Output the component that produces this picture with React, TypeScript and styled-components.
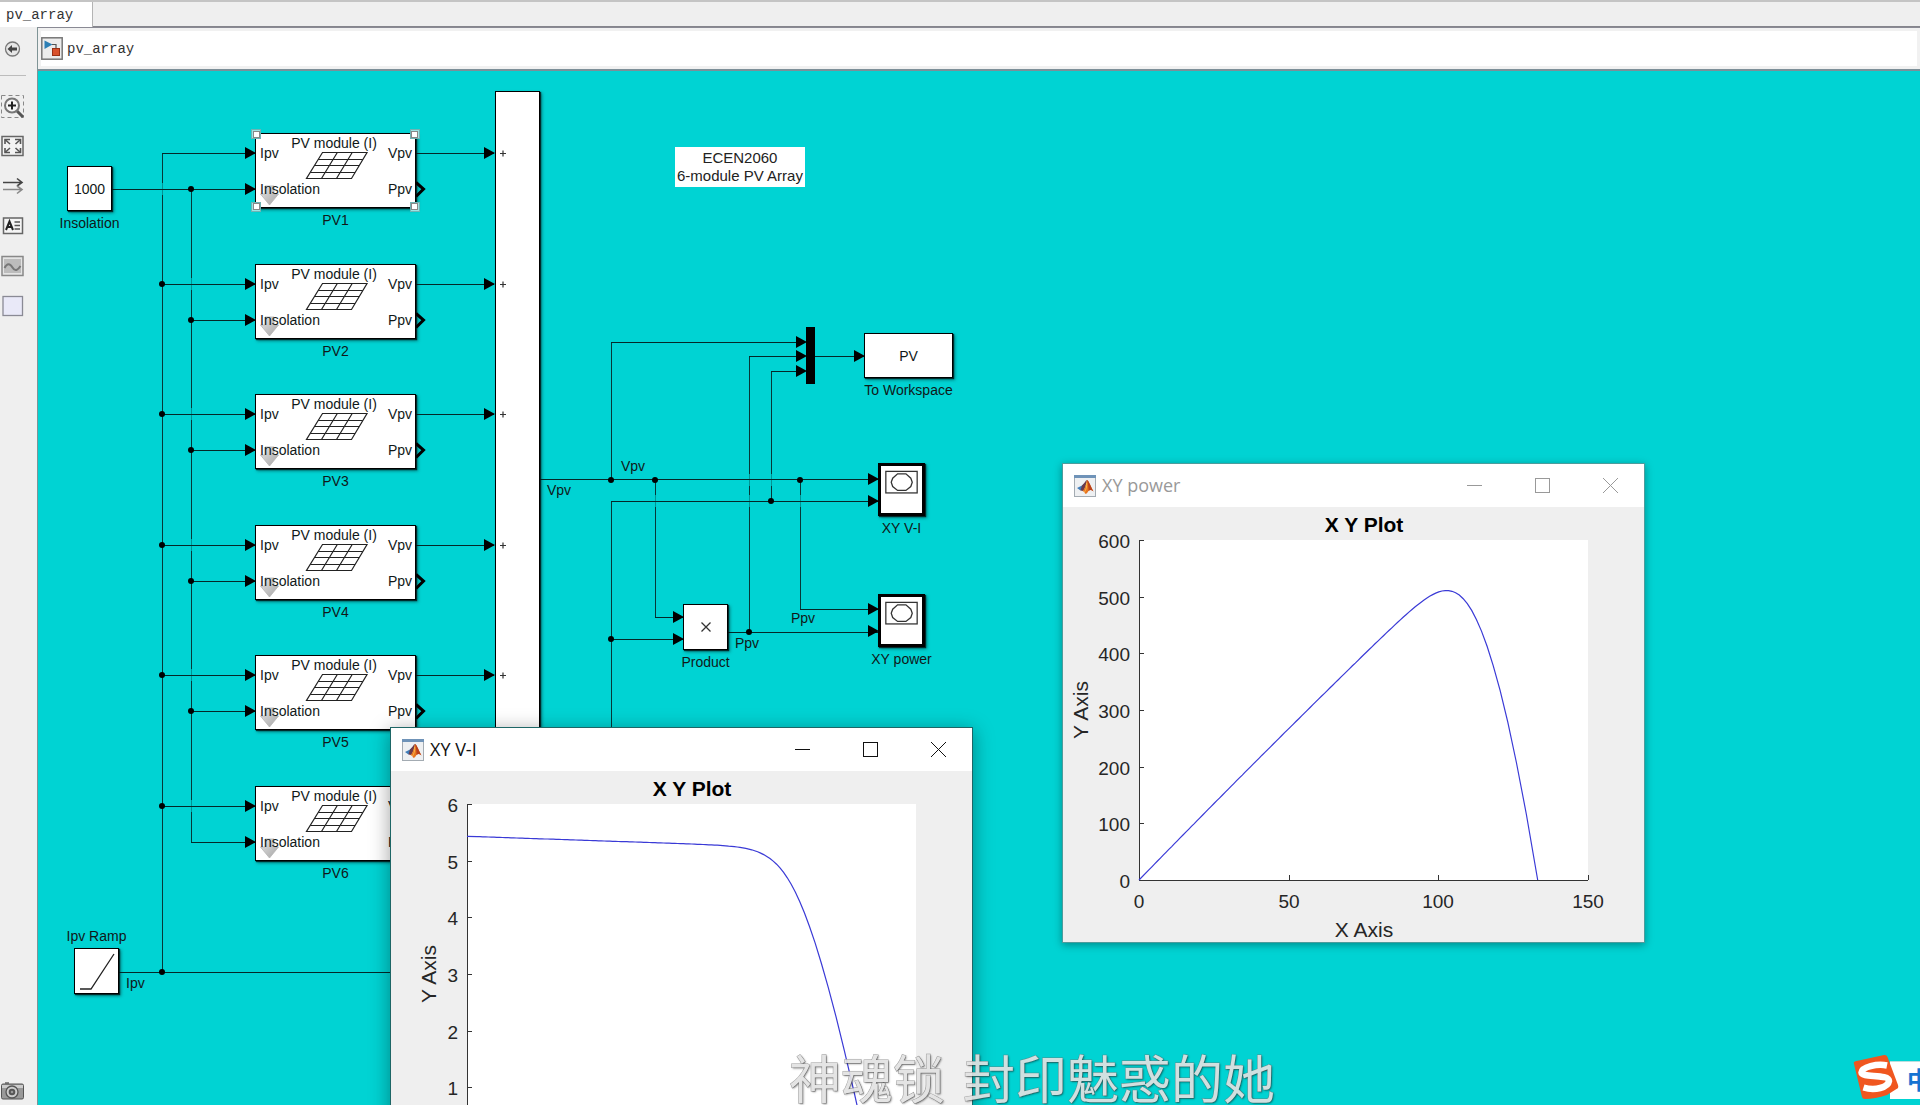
import React from "react";
import styled, { createGlobalStyle } from "styled-components";

const CYAN = "#00d3d3";
const PANEL = "#efefef";
const SANS = '"Liberation Sans", Arial, sans-serif';

const Global = createGlobalStyle`
  * { box-sizing: border-box; }
  html, body { margin: 0; height: 100%; overflow: hidden; }
  button { font: inherit; color: inherit; padding: 0; border: 0; background: none; }
`;

const Shell = styled.div`
  position: relative;
  display: flex;
  flex-direction: column;
  height: 100vh;
  overflow: hidden;
  background: ${PANEL};
  font-family: ${SANS};
  font-size: 14px;
  line-height: 16px;
  color: #101818;
`;

const TabBar = styled.nav`
  display: flex;
  height: 27px;
  border-top: 2px solid #c4c4c4;
  border-bottom: 1px solid #85858c;
  flex: none;
`;

const Tab = styled.button`
  width: 93px;
  height: 25px;
  padding: 0 0 0 6px;
  text-align: left;
  background: #fff;
  border-right: 1px solid #b4b4b4;
  font: 14px/26px "Liberation Mono", "Courier New", monospace;
  color: #333;
`;

const Main = styled.div`
  display: flex;
  flex: 1;
  min-height: 0;
`;

const ToolBar = styled.aside`
  display: flex;
  flex-direction: column;
  width: 37px;
  flex: none;
  padding-bottom: 2px;
`;

const Tool = styled.button<{ $h?: number }>`
  display: flex;
  align-items: center;
  width: 26px;
  height: ${(p) => p.$h ?? 40}px;
  svg { display: block; }
`;

const ToolRule = styled.hr`
  width: 26px;
  height: 1px;
  margin: 4px 0 10px;
  border: 0;
  background: #bcbcbc;
`;

const Spacer = styled.div`
  flex: 1;
`;

const Editor = styled.main`
  display: flex;
  flex-direction: column;
  flex: 1;
  min-width: 0;
  border-left: 1px solid #7f9496;
`;

const Crumbs = styled.div`
  display: flex;
  align-items: center;
  gap: 4px;
  height: 44px;
  padding-left: 3px;
  background: #fff;
  border-top: 1px solid #8a8a94;
  border-bottom: 2px solid #7c8f98;
  box-shadow: inset 0 0 0 3px #f1f1f1;
  flex: none;
  font: 14px/24px "Liberation Mono", "Courier New", monospace;
`;

const Crumb = styled.a`
  color: #333;
  text-decoration: none;
`;

const Canvas = styled.div`
  position: relative;
  flex: 1;
  overflow: hidden;
  background: ${CYAN};
`;

/* The model keeps its own coordinates; the sheet is scrolled under the view. */
const Sheet = styled.div`
  position: absolute;
  left: -38px;
  top: -71px;
  width: 1920px;
  height: 1200px;
`;

const Wires = styled.svg`
  position: absolute;
  inset: 0;
  width: 100%;
  height: 100%;
`;

const Node = styled.div<{ $x: number; $y: number; $w: number }>`
  position: absolute;
  left: ${(p) => p.$x}px;
  top: ${(p) => p.$y}px;
  width: ${(p) => p.$w}px;
  display: flex;
  flex-direction: column;
  align-items: center;
  gap: 4px;
  white-space: nowrap;
`;

const Box = styled.div<{ $h: number; $thick?: boolean }>`
  position: relative;
  display: flex;
  align-items: center;
  justify-content: center;
  width: 100%;
  height: ${(p) => p.$h}px;
  background: #fff;
  border: ${(p) => (p.$thick ? "3px solid #000" : "1px solid #000")};
  box-shadow: 1px 1px 1px rgba(0, 20, 20, 0.8), 2px 2px 3px rgba(0, 40, 40, 0.5);
  svg { display: block; }
`;

const PvBox = styled(Box)`
  display: block;
  padding: 1px;
`;

const PvArt = styled.svg`
  position: absolute;
  left: -1px;
  top: -1px;
  overflow: visible;
`;

const PvTitle = styled.div`
  position: relative;
  padding-right: 3px;
  height: 10px;
  text-align: center;
`;

const PortRow = styled.div`
  position: relative;
  display: flex;
  justify-content: space-between;
  padding: 0 2px 0 3px;
  height: 36px;
`;

const Handle = styled.i<{ $r?: boolean; $b?: boolean }>`
  position: absolute;
  ${(p) => (p.$r ? "right: -5px;" : "left: -5px;")}
  ${(p) => (p.$b ? "bottom: -5px;" : "top: -5px;")}
  width: 10px;
  height: 10px;
  display: flex;
  justify-content: ${(p) => (p.$r ? "flex-start" : "flex-end")};
  align-items: ${(p) => (p.$b ? "flex-start" : "flex-end")};
  background: #9be3e3;
  border: 1px solid #6fb4b4;
  &::after {
    content: "";
    width: 5px;
    height: 5px;
    background: #fff;
    border: 1px solid #888;
  }
`;

const SignalLabel = styled.span<{ $x: number; $y: number }>`
  position: absolute;
  left: ${(p) => p.$x}px;
  top: ${(p) => p.$y}px;
`;

const Note = styled.div`
  position: absolute;
  left: 675px;
  top: 147px;
  padding: 2px;
  background: #fff;
  text-align: center;
  font-size: 15px;
  line-height: 18px;
  white-space: nowrap;
  color: #222;
`;

const Win = styled.section<{ $x: number; $y: number; $active?: boolean }>`
  position: absolute;
  left: ${(p) => p.$x}px;
  top: ${(p) => p.$y}px;
  width: 581px;
  display: flex;
  flex-direction: column;
  background: ${PANEL};
  outline: 1px solid ${(p) => (p.$active ? "#1d6666" : "#4d9c9c")};
  box-shadow: ${(p) => (p.$active ? "0 4px 18px 2px rgba(0,0,0,.35)" : "0 2px 8px 1px rgba(0,0,0,.35)")};
  color: ${(p) => (p.$active ? "#111" : "#999")};
`;

const TitleBar = styled.header`
  display: flex;
  align-items: center;
  height: 43px;
  padding-left: 11px;
  background: #fff;
`;

const WinTitle = styled.h2`
  flex: 1;
  margin: 0;
  padding: 0 0 2px 6px;
  font: 400 18px/24px "Open Sans", "Noto Sans", sans-serif;
`;

const WinButton = styled.button`
  display: flex;
  align-items: center;
  justify-content: center;
  width: 68px;
  height: 43px;
`;

const Chart = styled.svg`
  display: block;
  width: 581px;
  height: 435px;
  font-family: ${SANS};
  font-size: 19px;
  fill: #262626;
  .name { font-size: 21px; }
  .title { font-size: 21px; font-weight: 700; fill: #000; }
`;

const Caption = styled.p`
  position: absolute;
  left: 789px;
  bottom: -10px;
  display: flex;
  gap: 18px;
  margin: 0;
  font: 400 52px/76px "Noto Sans CJK SC", sans-serif;
  color: #e2e2e2;
  white-space: nowrap;
  -webkit-text-stroke: 1px rgba(120, 120, 120, 0.75);
  paint-order: stroke;
  text-shadow: 1px 1px 2px rgba(0, 0, 0, 0.5);
  opacity: 0.92;
`;

const Ime = styled.div`
  position: absolute;
  right: 0;
  bottom: 6px;
  width: 30px;
  height: 38px;
  background: #fff;
  border-top: 1px solid #b8dede;
`;

const ImeMode = styled.button`
  position: absolute;
  left: 17px;
  top: 0;
  width: 24px;
  font: 700 24px/34px "Noto Sans CJK SC", sans-serif;
  color: #1673d2;
`;

const ImeLogo = styled.svg`
  position: absolute;
  left: -39px;
  top: -8px;
`;

/* ---------- model data ---------- */

const pvTops = [133, 264, 394, 525, 655, 786];
const ipvY = pvTops.map((t) => t + 20);
const insY = pvTops.map((t) => t + 56);

const Arrow = ({ x, y }: { x: number; y: number }) => (
  <path d={`M${x - 11} ${y - 6}L${x} ${y}L${x - 11} ${y + 6}Z`} fill="#000" />
);

const Dot = ({ x, y }: { x: number; y: number }) => <circle cx={x} cy={y} r={3} fill="#000" />;

const verticals: [number, number, number][] = [
  [162, 153, 972],
  [191, 189, 842],
  [611, 342, 480],
  [749, 356, 632],
  [771, 371, 501],
  [655, 480, 617],
  [800, 480, 609],
  [611, 501, 972],
];

const crossings: [number, number][] = [
  [162, 189],
  ...ipvY.slice(1).map((y) => [191, y] as [number, number]),
  [655, 501],
  [749, 480],
  [749, 501],
  [771, 480],
  [800, 501],
];

const horizontals: [number, number, number][] = [
  [112, 255, 189],
  [162, 255, 153],
  ...ipvY.slice(1).map((y) => [162, 255, y] as [number, number, number]),
  ...insY.slice(1).map((y) => [191, 255, y] as [number, number, number]),
  ...ipvY.map((y) => [416, 494, y] as [number, number, number]),
  [119, 611, 972],
  [540, 878, 479],
  [611, 878, 501],
  [611, 805, 342],
  [749, 805, 356],
  [771, 805, 371],
  [815, 864, 356],
  [655, 683, 617],
  [611, 683, 639],
  [728, 878, 632],
  [800, 878, 609],
];

const arrows: [number, number][] = [
  ...ipvY.map((y) => [256, y] as [number, number]),
  ...insY.map((y) => [256, y] as [number, number]),
  ...ipvY.map((y) => [495, y] as [number, number]),
  [879, 479],
  [879, 501],
  [879, 609],
  [879, 631],
  [807, 342],
  [807, 356],
  [807, 371],
  [865, 356],
  [684, 617],
  [684, 639],
];

const dots: [number, number][] = [
  ...ipvY.slice(1).map((y) => [162, y] as [number, number]),
  ...insY.slice(0, 5).map((y) => [191, y] as [number, number]),
  [162, 972],
  [611, 480],
  [655, 480],
  [800, 480],
  [771, 501],
  [611, 639],
  [749, 632],
];

function PvModule({ index, top, selected }: { index: number; top: number; selected?: boolean }) {
  return (
    <Node $x={255} $y={top} $w={161}>
      <PvBox $h={75}>
        <PvArt width="161" height="75" viewBox="0 0 161 75">
          <defs>
            <linearGradient id={`drop${index}`} x1="0" y1="0" x2="1" y2="1">
              <stop offset="0" stopColor="#e6e6e6" />
              <stop offset="1" stopColor="#a4a4a4" />
            </linearGradient>
          </defs>
          <path d="M10 53H19V61H23.500L14.500 72L5.500 61H10Z" fill={`url(#drop${index})`} stroke="#b5b5b5" strokeWidth="0.8" />
          <g fill="none" stroke="#222" strokeWidth="1.2">
            <path d="M67.500 19.500H112L96.500 45.500H51.500Z" />
            <path d="M63.200 26.500H107.800M59.500 32.500H104.200M55.300 39.500H100M82.300 19.500L66.500 45.500M97.200 19.500L81.500 45.500" />
          </g>
          <path d="M161 49.500L168.500 56L161 63.500" fill="none" stroke="#000" strokeWidth="3" />
        </PvArt>
        <PvTitle>PV module (I)</PvTitle>
        <PortRow>
          <span>Ipv</span>
          <span>Vpv</span>
        </PortRow>
        <PortRow>
          <span>Insolation</span>
          <span>Ppv</span>
        </PortRow>
        {selected && (
          <>
            <Handle />
            <Handle $r />
            <Handle $b />
            <Handle $r $b />
          </>
        )}
      </PvBox>
      <span>PV{index}</span>
    </Node>
  );
}

function Scope({ y, name }: { y: number; name: string }) {
  return (
    <Node $x={878} $y={y} $w={47}>
      <Box $h={53} $thick>
        <svg width="41" height="47" viewBox="0 0 41 48" fill="none" stroke="#333" strokeWidth="1.300">
          <rect x="4.500" y="5.500" width="32" height="22" />
          <path d="M16.500 8H25L30 12.500L31.500 16.500L30 21L25 25H16.500L11.500 21L10 16.500L11.500 12.500Z" />
        </svg>
      </Box>
      <span>{name}</span>
    </Node>
  );
}

const MatlabIcon = () => (
  <svg width="22" height="22" viewBox="0 0 22 22">
    <rect x="0.500" y="0.500" width="21" height="21" fill="#eef0f2" stroke="#a3abb2" />
    <rect x="0" y="0" width="22" height="3" fill="#6f93b8" />
    <path d="M3 13L8 10.500L11 8L9 14L6.500 15.500Z" fill="#3f7cb8" />
    <path d="M8 10.500C10 9 11.500 5.500 13 5C12.500 9 10.500 15 9 16L6.500 15.500Z" fill="#6b3a4a" />
    <path d="M13 5C15 6 17 12 19.500 16.500C17 14.500 15.500 14.500 13.500 17.500C12.500 19 11.500 19 11 18.500C10.500 17 10 16.500 8.500 16C11 14.500 12 8 13 5Z" fill="#e8741e" />
    <path d="M13 5C14 8 14.500 12 14.500 16C16 14.500 17 14.500 19.500 16.500C17 12 15 6 13 5Z" fill="#b8401b" />
    <path d="M12.600 8C12.800 12 12 15 10.500 17" stroke="#f9b64a" strokeWidth="1" fill="none" />
  </svg>
);

type FigureProps = {
  x: number;
  y: number;
  name: string;
  active?: boolean;
  xTicks?: number[];
  xName?: string;
  yTicks: number[];
  labelX: number;
  curve: [number, number][];
};

const PLOT = { x: 76, y: 33, w: 449, h: 340 };

function Figure({ x, y, name, active, xTicks = [], xName, yTicks, labelX, curve }: FigureProps) {
  const maxY = yTicks[yTicks.length - 1];
  const px = (v: number) => PLOT.x + (v / 150) * PLOT.w;
  const py = (v: number) => PLOT.y + PLOT.h - (v / maxY) * PLOT.h;
  const d = curve.map(([a, b], i) => `${i ? "L" : "M"}${px(a).toFixed(1)} ${py(b).toFixed(1)}`).join("");
  return (
    <Win $x={x} $y={y} $active={active} aria-label={name}>
      <TitleBar>
        <MatlabIcon />
        <WinTitle>{name}</WinTitle>
        <WinButton aria-label="Minimize">
          <svg width="15" height="15" stroke="currentColor"><path d="M0 7.500H15" /></svg>
        </WinButton>
        <WinButton aria-label="Maximize">
          <svg width="15" height="15" stroke="currentColor" fill="none"><rect x="0.500" y="0.500" width="14" height="14" /></svg>
        </WinButton>
        <WinButton aria-label="Close">
          <svg width="15" height="15" stroke="currentColor"><path d="M0 0L15 15M15 0L0 15" /></svg>
        </WinButton>
      </TitleBar>
      <Chart viewBox="0 0 581 435">
        <text className="title" x="301" y="25" textAnchor="middle">X Y Plot</text>
        <rect x={PLOT.x} y={PLOT.y} width={PLOT.w} height={PLOT.h} fill="#fff" />
        <path d="M76.500 33V373.500H525" fill="none" stroke="#333" />
        {yTicks.map((t) => (
          <g key={t}>
            <path d={`M76 ${Math.round(py(t)) + 0.5}h5`} stroke="#333" />
            <text x="67" y={Math.round(py(t)) + 8} textAnchor="end">{t}</text>
          </g>
        ))}
        {xTicks.map((t) => (
          <g key={t}>
            <path d={`M${Math.round(px(t)) + 0.5} 373v-5`} stroke="#333" />
            <text x={Math.round(px(t))} y="401" textAnchor="middle">{t}</text>
          </g>
        ))}
        {xName && <text className="name" x="301" y="430" textAnchor="middle">{xName}</text>}
        <text className="name" transform={`translate(${labelX} 203) rotate(-90)`} textAnchor="middle">Y Axis</text>
        <path d={d} fill="none" stroke="#3a3ad6" strokeWidth="1.200" />
      </Chart>
    </Win>
  );
}

/* Array characteristic: a linear shunt loss plus a diode term with series resistance. */
const viCurve: [number, number][] = [[0, 5.43]];
for (let i = 0; i <= 120; i++) {
  const ln = -21 + (i / 120) * (21 + Math.log(5.19));
  const drop = Math.exp(ln);
  const v = 108.36 + 5 * ln + 3.2 * drop;
  viCurve.push([v, Math.max(0, 5.43 - 0.0018 * v - drop)]);
}
const powerCurve = viCurve.map(([v, i]) => [v, v * i] as [number, number]);

export default function App() {
  return (
    <Shell>
      <Global />
      <TabBar>
        <Tab>pv_array</Tab>
      </TabBar>
      <Main>
        <ToolBar>
          <Tool $h={44} aria-label="Hide explorer">
            <svg width="25" height="18" viewBox="0 0 25 18">
              <circle cx="12.500" cy="9" r="7" fill="#e6e6e6" stroke="#777" strokeWidth="1.300" />
              <path d="M7.500 9L12 5V7.500H17V10.500H12V13Z" fill="#444" />
            </svg>
          </Tool>
          <ToolRule />
          <Tool aria-label="Zoom">
            <svg width="25" height="25" viewBox="0 0 25 25" fill="none">
              <rect x="1.500" y="1.500" width="22" height="22" stroke="#888" strokeDasharray="4 3" />
              <path d="M17 17L23 23" stroke="#555" strokeWidth="3" />
              <circle cx="12" cy="11.500" r="7" fill="#f6f6f6" stroke="#777" strokeWidth="2" />
              <path d="M8 11.500H16M12 7.500V15.500" stroke="#222" strokeWidth="2" />
            </svg>
          </Tool>
          <Tool aria-label="Fit to view">
            <svg width="25" height="22" viewBox="0 0 25 22" fill="none">
              <rect x="2" y="1.500" width="21" height="19" fill="#f3f3f3" stroke="#666" strokeWidth="1.500" />
              <path d="M5 9V4.500H10M15 4.500H20.500V9M20.500 13V17.500H15M10 17.500H5V13" stroke="#555" strokeWidth="1.600" />
              <path d="M5 4.500L10 9M20.500 4.500L15.500 9M20.500 17.500L15.500 13M5 17.500L10 13" stroke="#555" strokeWidth="1.600" />
            </svg>
          </Tool>
          <Tool aria-label="Sample time">
            <svg width="25" height="18" viewBox="0 0 25 18" fill="none" strokeWidth="1.600">
              <path d="M3 5.500H22M17 1.500L22 5.500L17 9" stroke="#444" />
              <path d="M3 12.500H22M17 9L22 12.500L17 16.500" stroke="#888" />
            </svg>
          </Tool>
          <Tool aria-label="Annotation">
            <svg width="25" height="20" viewBox="0 0 25 20" fill="none">
              <rect x="3.500" y="2" width="19" height="15.500" fill="#f5f5f5" stroke="#666" strokeWidth="1.500" />
              <path d="M6 14L9.500 5.500L13 14M7.500 11H12" stroke="#222" strokeWidth="2" />
              <path d="M14.500 6H20M14.500 9.500H20M14.500 13H20" stroke="#555" strokeWidth="1.300" />
            </svg>
          </Tool>
          <Tool aria-label="Image">
            <svg width="25" height="22" viewBox="0 0 25 22" fill="none">
              <rect x="2" y="1.500" width="21" height="19" fill="#e4e4e4" stroke="#888" strokeWidth="1.500" />
              <rect x="4" y="4" width="17" height="14" fill="#bcbcbc" />
              <path d="M4.500 13C7 8 10 8 12.500 12.500S18 15 20.500 11" stroke="#777" strokeWidth="2" />
            </svg>
          </Tool>
          <Tool aria-label="Area">
            <svg width="25" height="22" viewBox="0 0 25 22">
              <rect x="3" y="1.500" width="19.500" height="19" fill="#e9e9f8" stroke="#8a8a95" strokeWidth="1.300" />
            </svg>
          </Tool>
          <Spacer />
          <Tool $h={24} aria-label="Screenshot">
            <svg width="25" height="20" viewBox="0 0 25 20">
              <path d="M5 3V1H9V3" fill="#888" />
              <rect x="1.500" y="3" width="22" height="15" rx="1.500" fill="#999" stroke="#555" />
              <rect x="2" y="4" width="21" height="3" fill="#ccc" />
              <circle cx="12" cy="11" r="6" fill="#ccc" stroke="#555" strokeWidth="1.300" />
              <circle cx="12" cy="11" r="3.300" fill="#555" />
              <circle cx="12" cy="11" r="1.300" fill="#999" />
            </svg>
          </Tool>
        </ToolBar>
        <Editor>
          <Crumbs>
            <svg width="22" height="23" viewBox="0 0 22 23">
              <rect x="0.800" y="0.800" width="20.400" height="21.400" fill="#ececec" stroke="#777" strokeWidth="1.500" />
              <path d="M3.500 3.500L11.500 7.500L3.500 12Z" fill="#2d7fb5" />
              <path d="M11 7.500H15V12" fill="none" stroke="#555" strokeWidth="1.200" />
              <rect x="11.500" y="11.500" width="7" height="7" fill="#d9512c" stroke="#9a3015" />
            </svg>
            <Crumb href="#pv_array">pv_array</Crumb>
          </Crumbs>
          <Canvas>
            <Sheet>
              <Wires>
                <g shapeRendering="crispEdges" strokeWidth="1">
                  {verticals.map(([x, a, b], i) => (
                    <path key={i} d={`M${x} ${a}V${b}`} stroke="#063838" />
                  ))}
                  {crossings.map(([x, y], i) => (
                    <path key={i} d={`M${x} ${y - 6}V${y + 6}`} stroke={CYAN} strokeWidth="2" opacity="0.6" />
                  ))}
                  {horizontals.map(([a, b, y], i) => (
                    <path key={i} d={`M${a} ${y}H${b}`} stroke="#042828" />
                  ))}
                </g>
                {arrows.map(([x, y], i) => <Arrow key={i} x={x} y={y} />)}
                {dots.map(([x, y], i) => <Dot key={i} x={x} y={y} />)}
                <rect x="806" y="327" width="9" height="57" fill="#000" />
              </Wires>

              <Node $x={67} $y={166} $w={45}>
                <Box $h={45}>1000</Box>
                <span>Insolation</span>
              </Node>

              {pvTops.map((t, i) => <PvModule key={t} index={i + 1} top={t} selected={i === 0} />)}

              <Node $x={495} $y={91} $w={45}>
                <Box $h={778}>
                  <svg width="43" height="776" viewBox="0 0 43 776" stroke="#333" strokeWidth="1.200">
                    {ipvY.map((y) => <path key={y} d={`M4 ${y - 91.5}h6m-3 -3v6`} />)}
                  </svg>
                </Box>
              </Node>

              <Note>ECEN2060<br />6-module PV Array</Note>

              <Node $x={864} $y={333} $w={89}>
                <Box $h={45}>PV</Box>
                <span>To Workspace</span>
              </Node>

              <Scope y={463} name="XY V-I" />
              <Scope y={594} name="XY power" />

              <Node $x={683} $y={604} $w={45}>
                <Box $h={46}>
                  <svg width="10" height="10" stroke="#333" strokeWidth="1.300"><path d="M0.500 0.500L9.500 9.500M9.500 0.500L0.500 9.500" /></svg>
                </Box>
                <span>Product</span>
              </Node>

              <Node $x={74} $y={928} $w={45}>
                <span>Ipv Ramp</span>
                <Box $h={46}>
                  <svg width="41" height="42" viewBox="0 0 41 42" fill="none" stroke="#222" strokeWidth="1.300"><path d="M4 39H15L38 4" /></svg>
                </Box>
              </Node>

              <SignalLabel $x={621} $y={458}>Vpv</SignalLabel>
              <SignalLabel $x={547} $y={482}>Vpv</SignalLabel>
              <SignalLabel $x={791} $y={610}>Ppv</SignalLabel>
              <SignalLabel $x={735} $y={635}>Ppv</SignalLabel>
              <SignalLabel $x={126} $y={975}>Ipv</SignalLabel>
            </Sheet>
          </Canvas>
        </Editor>
      </Main>

      <Figure
        x={1063}
        y={464}
        name="XY power"
        labelX={25}
        xTicks={[0, 50, 100, 150]}
        xName="X Axis"
        yTicks={[0, 100, 200, 300, 400, 500, 600]}
        curve={powerCurve}
      />
      <Figure x={391} y={728} name="XY V-I" active labelX={45} yTicks={[1, 2, 3, 4, 5, 6]} curve={viCurve} />

      <Caption>
        <span>神魂锁</span> <span>封印魅惑的她</span>
      </Caption>

      <Ime>
        <ImeMode aria-label="中">中</ImeMode>
        <ImeLogo width="48" height="48" viewBox="0 0 48 48">
          <path d="M3 10Q2 8 4.500 7.300L33 1Q35.500 0.500 36.500 3L47 31Q48 34 45.500 35L36 41Q24 45 14 45Q11.500 45 11 43Z" fill="#f0561f" />
          <path d="M36 11.500C26 9.500 11 13 10.500 18.500C10.500 24 38 19.500 38 27C37 33.500 24 37 12.500 33.500" fill="none" stroke="#fff" strokeWidth="6.500" />
        </ImeLogo>
      </Ime>
    </Shell>
  );
}
